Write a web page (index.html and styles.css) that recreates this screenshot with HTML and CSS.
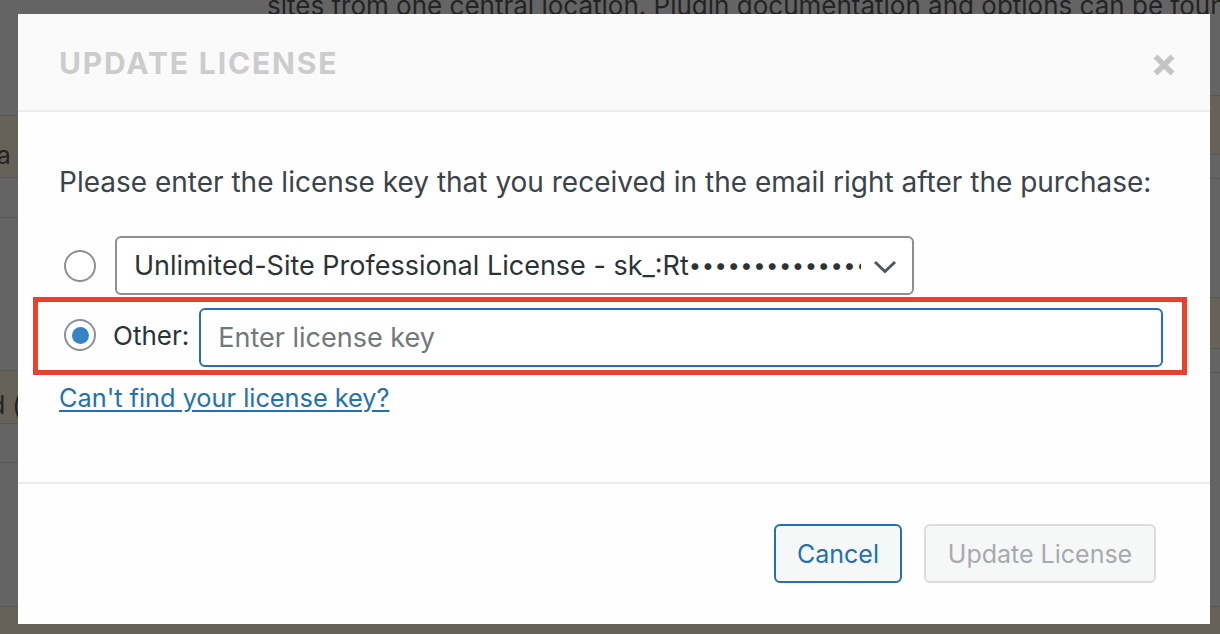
FILE: index.html
```html
<!DOCTYPE html>
<html lang="en">
<head>
<meta charset="utf-8">
<title>Update License</title>
<link rel="stylesheet" href="styles.css">
</head>
<body>
<div class="page">
  <div class="intro">sites from one central location. Plugin documentation and options can be found here.</div>
  <div class="cols">
    <div class="col col-left">
      <div class="gap g1"></div>
      <div class="band b1"><span class="bgtext t1">Extra</span></div>
      <div class="gap g2"></div>
      <div class="gap g3"></div>
      <div class="band b2"><span class="bgtext t2">d (</span></div>
      <div class="gap g4"></div>
      <div class="gap g5"></div>
    </div>
    <div class="col col-right">
      <div class="gap r1"></div>
      <div class="band rb1"></div>
      <div class="gap r2"></div>
      <div class="gap r3"></div>
      <div class="band rb2"></div>
      <div class="gap r4"></div>
      <div class="gap r5"></div>
    </div>
  </div>
  <div class="foot-band"></div>
</div>

<div class="modal">
  <div class="modal-header">
    <h2 class="modal-title">UPDATE LICENSE</h2>
    <svg class="close" width="24" height="22" viewBox="0 0 24 22" aria-hidden="true">
      <path d="M3.5 2.5 L20.5 19.5 M20.5 2.5 L3.5 19.5" stroke="#c4c4c4" stroke-width="5.4" fill="none"/>
    </svg>
  </div>
  <div class="modal-body">
    <p class="intro-text">Please enter the license key that you received in the email right after the purchase:</p>
    <div class="opt-row">
      <span class="radio"></span>
      <div class="select">
        <span class="select-text">Unlimited-Site Professional License - sk_:Rt<span class="dots">••••••••••••••••••••••••</span></span>
        <svg class="chev" width="24" height="14" viewBox="0 0 24 14" aria-hidden="true">
          <path d="M2 2 L12 11.5 L22 2" stroke="#50575e" stroke-width="3" fill="none"/>
        </svg>
      </div>
    </div>
    <div class="other-row">
      <span class="radio checked"></span>
      <span class="other-label">Other:</span>
      <div class="key-input">Enter license key</div>
    </div>
    <a class="help-link" href="#">Can't find your license key?</a>
  </div>
  <div class="modal-footer">
    <button class="btn btn-cancel">Cancel</button>
    <button class="btn btn-update">Update License</button>
  </div>
</div>
</body>
</html>
```
FILE: styles.css
```css
* { box-sizing: border-box; }
html, body { margin: 0; padding: 0; }
body {
  width: 1220px;
  height: 634px;
  overflow: hidden;
  position: relative;
  font-family: "Inter", "Noto Sans", sans-serif;
  background: #646464;
}

/* dimmed background page */
.page {
  height: 634px;
  display: flex;
  flex-direction: column;
  background: #646464;
}
.intro {
  height: 14px;
  overflow: hidden;
  white-space: nowrap;
  padding-left: 267px;
  font-size: 26px;
  line-height: 12px;
  color: #232323;
}
.cols {
  display: flex;
  height: 592px;
}
.col { flex: 1; display: flex; flex-direction: column; }
.gap { background: #646464; border-top: 1px solid #575757; }
.band { background: #66625a; border-top: 1px solid #575757; font-size: 25px; color: #232323; overflow: hidden; white-space: nowrap; display: flex; align-items: center; }
.col-left .band { padding-top: 16px; }
.col-left .g1 { height: 101px; border-top: none; }
.col-left .b1 { height: 62px; }
.col-left .g2 { height: 40px; }
.col-left .g3 { height: 153px; }
.col-left .b2 { height: 53px; }
.col-left .g4 { height: 39px; }
.col-left .g5 { flex: 1; }
.t1 { margin-left: -50px; }
.t2 { margin-left: -10px; }

.col-right .r1 { height: 81px; border-top: none; }
.col-right .rb1 { height: 59px; }
.col-right .r2 { height: 24px; }
.col-right .r3 { height: 119px; }
.col-right .rb2 { height: 51px; }
.col-right .r4 { height: 24px; }
.col-right .r5 { flex: 1; }

.foot-band { flex: 1; background: #66625a; border-top: 1px solid #575757; }

/* modal */
.modal {
  position: absolute;
  left: 18px;
  top: 14px;
  width: 1192px;
  height: 610px;
  background: #fefefe;
  display: flex;
  flex-direction: column;
}
.modal-header {
  height: 98px;
  background: #fafafa;
  border-bottom: 2px solid #ececec;
  display: flex;
  align-items: center;
  justify-content: space-between;
  padding: 0 34px 0 41px;
}
.modal-title {
  margin: 0;
  font-size: 30px;
  font-weight: 700;
  letter-spacing: 1.85px;
  color: #cccccc;
  margin-top: 2px;
}
.close { margin-top: 6px; }

.modal-body {
  flex: 1;
  padding: 52px 47px 0 41px;
  border-bottom: 2px solid #ececec;
}
.intro-text {
  margin: 0;
  font-size: 28px;
  line-height: 36px;
  color: #3c434a;
}
.opt-row {
  display: flex;
  align-items: center;
  margin-top: 36px;
  height: 59px;
}
.radio {
  width: 32px;
  height: 32px;
  border: 2px solid #8c8f94;
  border-radius: 50%;
  background: #fff;
  flex: none;
  margin-left: 5px;
  display: flex;
  align-items: center;
  justify-content: center;
}
.radio.checked::after {
  content: "";
  width: 17px;
  height: 17px;
  border-radius: 50%;
  background: #3582c4;
}
.select {
  margin-left: 19px;
  width: 799px;
  height: 59px;
  border: 2px solid #8c8f94;
  border-radius: 6px;
  background: #fff;
  display: flex;
  align-items: center;
  padding: 0 15px 0 17px;
}
.select-text {
  flex: 1;
  overflow: hidden;
  white-space: nowrap;
  font-size: 27px;
  color: #2c3338;
  margin-right: 12px;
}
.dots { font-size: 22px; letter-spacing: 0.5px; vertical-align: 2px; }
.chev { flex: none; margin-top: 2px; }

.other-row {
  margin: 2px -24px 0 -26px;
  height: 78px;
  border: 5px solid #e9412b;
  display: flex;
  align-items: center;
  padding: 3px 19px 0 21px;
}
.other-label {
  margin-left: 17px;
  font-size: 26px;
  color: #2c3338;
  margin-top: -5px;
}
.other-row .radio { margin-top: -5px; }
.key-input {
  margin-left: 10px;
  flex: 1;
  height: 59px;
  border: 2px solid #2271b1;
  border-radius: 6px;
  background: #fff;
  display: flex;
  align-items: center;
  padding-left: 17px;
  font-size: 27px;
  color: #72777c;
}
.help-link {
  display: inline-block;
  margin-top: 8px;
  font-size: 25.3px;
  line-height: 30px;
  color: #2271b1;
  text-decoration: underline;
  text-underline-offset: 3px;
}

.modal-footer {
  height: 140px;
  display: flex;
  justify-content: flex-end;
  align-items: flex-start;
  padding: 40px 54px 0 0;
  gap: 22px;
}
.btn {
  height: 59px;
  border-radius: 6px;
  font-family: "Inter", "Noto Sans", sans-serif;
  font-size: 25px;
  background: #f6f7f7;
  padding: 0 10px;
}
.btn-cancel {
  width: 128px;
  border: 2px solid #2271b1;
  color: #2271b1;
}
.btn-update {
  width: 232px;
  border: 2px solid #dcdcde;
  color: #a7aaad;
}
```
